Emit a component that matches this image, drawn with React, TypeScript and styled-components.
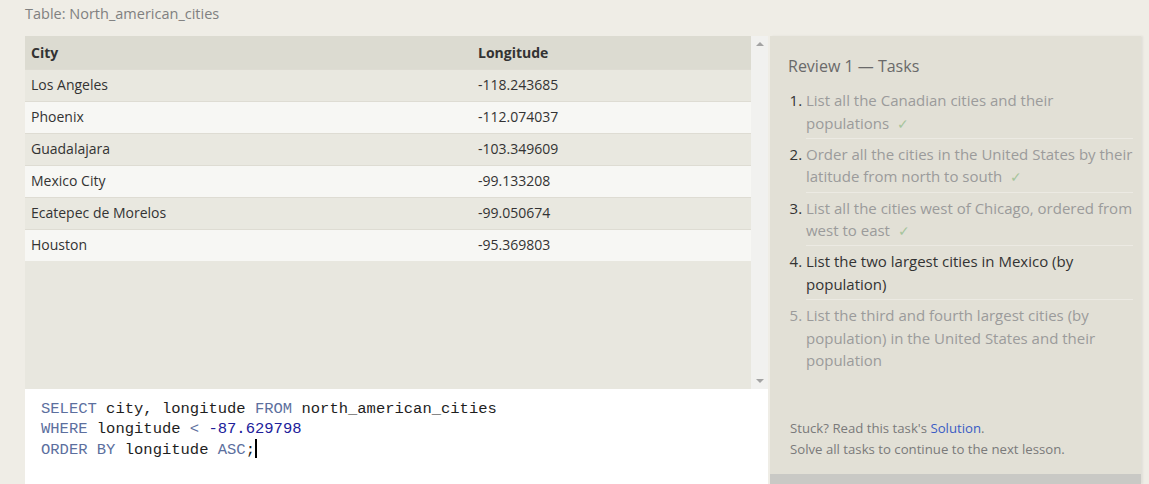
import React from "react";
import styled, { createGlobalStyle } from "styled-components";

const GlobalStyle = createGlobalStyle`
  html, body { margin: 0; padding: 0; }
  body {
    background: #efede6;
    font-family: "Open Sans", "Noto Sans", sans-serif;
    width: 1149px;
    height: 484px;
    overflow: hidden;
  }
`;

const Page = styled.div`
  display: flex;
  flex-direction: column;
  height: 484px;
  padding-left: 25px;
  padding-right: 8px;
  box-sizing: border-box;
`;

const TableTitle = styled.div`
  height: 36px;
  padding-top: 4px;
  box-sizing: border-box;
  font-size: 14.5px;
  line-height: 20px;
  color: #808080;
`;

const Main = styled.div`
  flex: 1;
  display: flex;
  gap: 2px;
  min-height: 0;
`;

const LeftColumn = styled.div`
  width: 743px;
  display: flex;
  flex-direction: column;
`;

const TableArea = styled.div`
  height: 353px;
  display: flex;
  background: #e8e7df;
`;

const TableScroll = styled.div`
  flex: 1;
`;

const ResultTable = styled.table`
  width: 100%;
  border-collapse: collapse;
  font-size: 14px;
  color: #333;
`;

const HeadCell = styled.th<{ $w?: number }>`
  text-align: left;
  font-weight: 700;
  background: #dcdbd1;
  height: 33px;
  padding: 0 6px;
  width: ${(p) => (p.$w ? `${p.$w}px` : "auto")};
`;

const Row = styled.tr<{ $alt: boolean }>`
  background: ${(p) => (p.$alt ? "#f7f7f4" : "#e9e8e0")};
  border-top: 1px solid #dedcd3;
`;

const Cell = styled.td`
  height: 29px;
  padding: 0 6px 2px;
  line-height: 20px;
`;

const ScrollBar = styled.div`
  width: 17px;
  background: #f1f1ef;
  display: flex;
  flex-direction: column;
  justify-content: space-between;
  align-items: center;
  padding: 6px 0;
  box-sizing: border-box;
`;

const Arrow = styled.div<{ $down?: boolean }>`
  width: 0;
  height: 0;
  border-left: 4px solid transparent;
  border-right: 4px solid transparent;
  ${(p) =>
    p.$down
      ? "border-top: 4px solid #a3a3a3;"
      : "border-bottom: 4px solid #a3a3a3;"}
`;

const Editor = styled.div`
  flex: 1;
  background: #ffffff;
  padding: 10px 16px;
  font-family: "Liberation Mono", "DejaVu Sans Mono", monospace;
  font-size: 15.5px;
  line-height: 20px;
  color: #1e1e1e;
  white-space: pre;
`;

const Kw = styled.span`
  color: #5c6f9e;
`;

const Num = styled.span`
  color: #20209a;
`;

const Caret = styled.span`
  display: inline-block;
  width: 2px;
  height: 19px;
  background: #000;
  vertical-align: -4px;
`;

const TaskPanel = styled.div`
  width: 371px;
  display: flex;
  flex-direction: column;
  background: #e2e0d6;
  box-shadow: 2px 0 2px rgba(0, 0, 0, 0.06);
`;

const TaskBody = styled.div`
  flex: 1;
  display: flex;
  flex-direction: column;
  padding: 20px 8px 14px 18px;
`;

const TaskTitle = styled.div`
  font-size: 16px;
  line-height: 20px;
  color: #6a6a6a;
  margin-bottom: 9px;
`;

const TaskList = styled.ol`
  margin: 0;
  padding-left: 18px;
`;

const Task = styled.li<{ $state: "done" | "current" | "todo" }>`
  font-size: 15px;
  line-height: 22.5px;
  padding: 4px 0 3.75px;
  color: ${(p) => (p.$state === "current" ? "#333" : "#9b9b9b")};
  border-bottom: 1px solid #eceae3;
  &:last-child {
    border-bottom: none;
  }
  &::marker {
    color: ${(p) => (p.$state === "todo" ? "#9b9b9b" : "#333")};
  }
`;

const Check = styled.span`
  color: #a6c49c;
  margin-left: 8px;
  font-size: 14px;
  line-height: 1;
`;

const Footer = styled.div`
  margin-top: auto;
  font-size: 13.2px;
  line-height: 21px;
  color: #7a7a7a;
  padding-left: 2px;
`;

const Link = styled.a`
  color: #3a5cc4;
  text-decoration: none;
`;

const BottomBar = styled.div`
  height: 10px;
  background: #c9c9c5;
`;

const rows: [string, string][] = [
  ["Los Angeles", "-118.243685"],
  ["Phoenix", "-112.074037"],
  ["Guadalajara", "-103.349609"],
  ["Mexico City", "-99.133208"],
  ["Ecatepec de Morelos", "-99.050674"],
  ["Houston", "-95.369803"],
];

const tasks: { text: string; state: "done" | "current" | "todo" }[] = [
  { text: "List all the Canadian cities and their populations", state: "done" },
  {
    text: "Order all the cities in the United States by their latitude from north to south",
    state: "done",
  },
  {
    text: "List all the cities west of Chicago, ordered from west to east",
    state: "done",
  },
  { text: "List the two largest cities in Mexico (by population)", state: "current" },
  {
    text: "List the third and fourth largest cities (by population) in the United States and their population",
    state: "todo",
  },
];

export default function App() {
  return (
    <>
      <GlobalStyle />
      <Page>
        <TableTitle>Table: North_american_cities</TableTitle>
        <Main>
          <LeftColumn>
            <TableArea>
              <TableScroll>
                <ResultTable>
                  <thead>
                    <tr>
                      <HeadCell $w={435}>City</HeadCell>
                      <HeadCell>Longitude</HeadCell>
                    </tr>
                  </thead>
                  <tbody>
                    {rows.map(([c, l], i) => (
                      <Row key={c} $alt={i % 2 === 1}>
                        <Cell>{c}</Cell>
                        <Cell>{l}</Cell>
                      </Row>
                    ))}
                  </tbody>
                </ResultTable>
              </TableScroll>
              <ScrollBar>
                <Arrow />
                <Arrow $down />
              </ScrollBar>
            </TableArea>
            <Editor>
              <Kw>SELECT</Kw> city, longitude <Kw>FROM</Kw> north_american_cities{"\n"}
              <Kw>WHERE</Kw> longitude <Kw>&lt;</Kw> <Num>-87.629798</Num>
              {"\n"}
              <Kw>ORDER BY</Kw> longitude <Kw>ASC</Kw>;<Caret />
            </Editor>
          </LeftColumn>
          <TaskPanel>
            <TaskBody>
              <TaskTitle>Review 1 — Tasks</TaskTitle>
              <TaskList>
                {tasks.map((t) => (
                  <Task key={t.text} $state={t.state}>
                    {t.text}
                    {t.state === "done" && <Check>✓</Check>}
                  </Task>
                ))}
              </TaskList>
              <Footer>
                Stuck? Read this task's <Link href="#">Solution</Link>.
                <br />
                Solve all tasks to continue to the next lesson.
              </Footer>
            </TaskBody>
            <BottomBar />
          </TaskPanel>
        </Main>
      </Page>
    </>
  );
}
